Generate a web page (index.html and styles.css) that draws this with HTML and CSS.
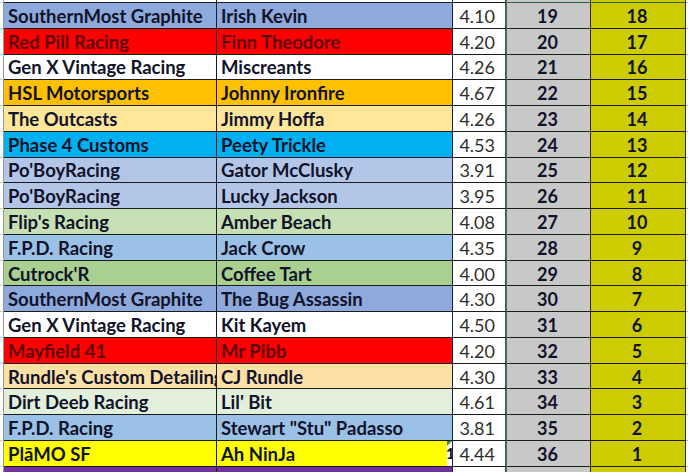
FILE: index.html
```html
<!DOCTYPE html>
<html>
<head>
<meta charset="utf-8">
<link rel="stylesheet" href="styles.css">
</head>
<body>
<div class="sheet">
  <div class="row top"><div class="s"></div><div class="a"></div><div class="b"></div><div class="c"></div><div class="d"></div><div class="e"></div><div class="f"></div></div>
  <div class="row blue1"><div class="s"></div><div class="a">SouthernMost Graphite</div><div class="b">Irish Kevin</div><div class="c">4.10</div><div class="d">19</div><div class="e">18</div><div class="f"></div></div>
  <div class="row red"><div class="s"></div><div class="a">Red Pill Racing</div><div class="b">Finn Theodore</div><div class="c">4.20</div><div class="d">20</div><div class="e">17</div><div class="f"></div></div>
  <div class="row white"><div class="s"></div><div class="a">Gen X Vintage Racing</div><div class="b">Miscreants</div><div class="c">4.26</div><div class="d">21</div><div class="e">16</div><div class="f"></div></div>
  <div class="row gold"><div class="s"></div><div class="a">HSL Motorsports</div><div class="b">Johnny Ironfire</div><div class="c">4.67</div><div class="d">22</div><div class="e">15</div><div class="f"></div></div>
  <div class="row cream"><div class="s"></div><div class="a">The Outcasts</div><div class="b">Jimmy Hoffa</div><div class="c">4.26</div><div class="d">23</div><div class="e">14</div><div class="f"></div></div>
  <div class="row cyan"><div class="s"></div><div class="a">Phase 4 Customs</div><div class="b">Peety Trickle</div><div class="c">4.53</div><div class="d">24</div><div class="e">13</div><div class="f"></div></div>
  <div class="row blue3"><div class="s"></div><div class="a">Po'BoyRacing</div><div class="b">Gator McClusky</div><div class="c">3.91</div><div class="d">25</div><div class="e">12</div><div class="f"></div></div>
  <div class="row blue3"><div class="s"></div><div class="a">Po'BoyRacing</div><div class="b">Lucky Jackson</div><div class="c">3.95</div><div class="d">26</div><div class="e">11</div><div class="f"></div></div>
  <div class="row green1"><div class="s"></div><div class="a">Flip's Racing</div><div class="b">Amber Beach</div><div class="c">4.08</div><div class="d">27</div><div class="e">10</div><div class="f"></div></div>
  <div class="row blue2"><div class="s"></div><div class="a">F.P.D. Racing</div><div class="b">Jack Crow</div><div class="c">4.35</div><div class="d">28</div><div class="e">9</div><div class="f"></div></div>
  <div class="row green2"><div class="s"></div><div class="a">Cutrock'R</div><div class="b">Coffee Tart</div><div class="c">4.00</div><div class="d">29</div><div class="e">8</div><div class="f"></div></div>
  <div class="row blue1"><div class="s"></div><div class="a">SouthernMost Graphite</div><div class="b">The Bug Assassin</div><div class="c">4.30</div><div class="d">30</div><div class="e">7</div><div class="f"></div></div>
  <div class="row white"><div class="s"></div><div class="a">Gen X Vintage Racing</div><div class="b">Kit Kayem</div><div class="c">4.50</div><div class="d">31</div><div class="e">6</div><div class="f"></div></div>
  <div class="row red"><div class="s"></div><div class="a">Mayfield 41</div><div class="b">Mr Pibb</div><div class="c">4.20</div><div class="d">32</div><div class="e">5</div><div class="f"></div></div>
  <div class="row peach"><div class="s"></div><div class="a">Rundle's Custom Detailing</div><div class="b">CJ Rundle</div><div class="c">4.30</div><div class="d">33</div><div class="e">4</div><div class="f"></div></div>
  <div class="row green3"><div class="s"></div><div class="a">Dirt Deeb Racing</div><div class="b">Lil' Bit</div><div class="c">4.61</div><div class="d">34</div><div class="e">3</div><div class="f"></div></div>
  <div class="row blue2"><div class="s"></div><div class="a">F.P.D. Racing</div><div class="b">Stewart "Stu" Padasso</div><div class="c">3.81</div><div class="d">35</div><div class="e">2</div><div class="f"></div></div>
  <div class="row yellow"><div class="s"></div><div class="a">PlāMO SF</div><div class="b"><span class="txt">Ah NinJa</span><span class="spill">1</span></div><div class="c">4.44</div><div class="d">36</div><div class="e">1</div><div class="f"></div></div>
  <div class="row purple last"><div class="s"></div><div class="a"></div><div class="b"></div><div class="c"></div><div class="d"></div><div class="e"></div><div class="f"></div></div>
</div>
</body>
</html>
```

FILE: styles.css
```css
html, body {
  margin: 0;
  padding: 0;
  background: #ffffff;
}

.sheet {
  width: 688px;
  height: 472px;
  overflow: hidden;
  display: flex;
  flex-direction: column;
  font-family: Lato, "Open Sans", sans-serif;
  font-weight: 700;
  font-size: 18.5px;
  color: #10132a;
}

.row {
  display: grid;
  grid-template-columns: 4px 213px 236px 54px 84px 95px 2px;
  height: 25.78px;
  flex: none;
}

.row.top {
  height: 3px;
}

.row.last {
  height: 10px;
}

.row > div {
  box-sizing: border-box;
  border-bottom: 1px solid #1c1c1c;
  white-space: nowrap;
  overflow: hidden;
  display: flex;
  align-items: center;
  padding-top: 1px;
}

.s {
  border-right: 1px solid #8d9c90;
  border-bottom-color: #c9cfc9 !important;
  background: #fff;
}

.a {
  border-right: 1px solid #1c1c1c;
  padding-left: 4px;
}

.b {
  border-right: 1px solid #16204a;
  padding-left: 4px;
}

.c {
  background: #fff;
  border-right: 2px solid #3e6b4c;
  justify-content: flex-end;
  padding-right: 10px;
  font-weight: 400;
  font-size: 18px;
  color: #2e2e2e;
}

.d {
  background: #c8c8c8;
  border-right: 1px solid #2a2a2a;
  justify-content: center;
  padding-right: 2px;
  font-size: 18px;
}

.e {
  background: #cccc00;
  border-right: 1px solid #2a2a2a;
  justify-content: center;
  padding-right: 2px;
  font-size: 18px;
}

.f {
  background: #fff;
  border-bottom-color: #b8b8b8 !important;
}

.row.top > div {
  border-bottom-color: #1c1c1c;
}

.row.top .d,
.row.top .e {
  border-bottom-color: #2f5e40;
}

.blue1 .a, .blue1 .b { background: #8ea9db; }
.blue2 .a, .blue2 .b { background: #9bc2e6; }
.blue3 .a, .blue3 .b { background: #b4c6e7; }
.red .a, .red .b { background: #ff0000; color: #5c0000; }
.white .a, .white .b { background: #ffffff; }
.gold .a, .gold .b { background: #ffc000; }
.cream .a, .cream .b { background: #ffe699; }
.cyan .a, .cyan .b { background: #00b0f0; }
.green1 .a, .green1 .b { background: #c6e0b4; }
.green2 .a, .green2 .b { background: #a9d08e; }
.green3 .a, .green3 .b { background: #e2efda; }
.peach .a, .peach .b { background: #fde0a6; }
.yellow .a { background: #ffff00; }
.purple .a, .purple .b { background: #7030a0; }
.top .a, .top .b { background: #ffffff; }

.yellow .b {
  background: linear-gradient(to right, #ffff00 0, #ffff00 230px, #ffffff 230px);
  padding-right: 0;
  position: relative;
}

.txt {
  flex: 1;
}

.spill {
  width: 6px;
  font-size: 15px;
  line-height: 1;
  text-align: center;
  letter-spacing: -1px;
  color: #111;
}

.yellow .b::after {
  content: "";
  position: absolute;
  top: 0;
  right: 0;
  border-top: 5px solid #3c8a3c;
  border-right: 5px solid transparent;
  width: 0;
  height: 0;
}
```
